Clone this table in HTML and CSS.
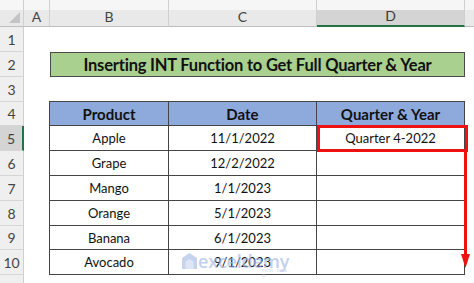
FILE: index.html
```html
<!DOCTYPE html>
<html>
<head>
<meta charset="utf-8">
<link rel="stylesheet" href="styles.css">
</head>
<body>
<div class="sheet">
  <div class="corner"><span class="tri"></span></div>
  <div class="ch">A</div>
  <div class="ch">B</div>
  <div class="ch">C</div>
  <div class="ch sel">D</div>
  <div class="ch last"></div>

  <div class="rh r1">1</div>
  <div class="rh r2">2</div>
  <div class="rh r3">3</div>
  <div class="rh r4">4</div>
  <div class="rh r5 sel">5</div>
  <div class="rh r6">6</div>
  <div class="rh r7">7</div>
  <div class="rh r8">8</div>
  <div class="rh r9">9</div>
  <div class="rh r10">10</div>
  <div class="rh r11"></div>

  <div class="title">Inserting INT Function to Get Full Quarter &amp; Year</div>

  <div class="tbl">
    <div class="th">Product</div><div class="th">Date</div><div class="th">Quarter &amp; Year</div>
    <div class="td">Apple</div><div class="td">11/1/2022</div><div class="td">Quarter 4-2022</div>
    <div class="td">Grape</div><div class="td">12/2/2022</div><div class="td"></div>
    <div class="td">Mango</div><div class="td">1/1/2023</div><div class="td"></div>
    <div class="td">Orange</div><div class="td">5/1/2023</div><div class="td"></div>
    <div class="td">Banana</div><div class="td">6/1/2023</div><div class="td"></div>
    <div class="td">Avocado</div><div class="td">9/1/2023</div><div class="td"></div>
  </div>

  <div class="watermark">
    <svg class="wm-logo" width="15" height="16" viewBox="0 0 15 16"><path d="M7.5 0 L15 5 L15 16 L0 16 L0 5 Z" fill="#a9bde6"/><path d="M7.5 6 L11.5 8.5 L11.5 16 L3.5 16 L3.5 8.5 Z" fill="#cdd9f1"/></svg>
    <span class="wm-text">exceldemy</span>
    <span class="wm-sub">EXCEL · DATA · BI</span>
  </div>

  <div class="redbox"></div>
  <svg class="arrow" width="14" height="120" viewBox="0 0 14 120"><rect x="5" y="0" width="3" height="106" fill="#ee1111"/><polygon points="2,104 11,104 6.5,118" fill="#ee1111"/></svg>
</div>
</body>
</html>
```

FILE: styles.css
```css
* { box-sizing: border-box; }
html, body { margin: 0; padding: 0; background: #ffffff; }
body { width: 474px; height: 283px; overflow: hidden; font-family: Lato, "Open Sans", sans-serif; }

.sheet {
  position: relative;
  display: grid;
  grid-template-columns: 24px 26px 119px 148px 148px 9px;
  grid-template-rows: 27px 25px 25px 25px 24px 25px 25px 25px 25px 24px 25px 8px;
  width: 474px;
  height: 283px;
}

.corner {
  grid-column: 1; grid-row: 1;
  background: linear-gradient(#f6f6f6 0 10px, #e9e9e9 10px);
  border-right: 1px solid #cfcfcf;
  border-bottom: 1px solid #bdbdbd;
  position: relative;
}
.tri {
  position: absolute; right: 3px; bottom: 3px;
  width: 0; height: 0;
  border-left: 11px solid transparent;
  border-bottom: 11px solid #c4c4c4;
}

.ch {
  grid-row: 1;
  background: linear-gradient(#f6f6f6 0 10px, #e9e9e9 10px);
  border-right: 1px solid #d0d0d0;
  border-bottom: 1px solid #bdbdbd;
  display: flex; align-items: flex-end; justify-content: center;
  padding-bottom: 1px;
  font-size: 14px; color: #444;
}
.ch.sel {
  background: linear-gradient(#f6f6f6 0 10px, #d4d4d4 10px);
  border-bottom: 2px solid #217346;
  color: #3a3a3a;
}
.ch.last { border-right: none; }

.rh {
  grid-column: 1;
  background: #efefef;
  border-right: 1px solid #cfcfcf;
  border-bottom: 1px solid #d6d6d6;
  display: flex; align-items: center; justify-content: center;
  font-size: 14px; color: #444;
}
.rh.sel { background: #d4d4d4; border-right: 2px solid #217346; }
.r1 { grid-row: 2; } .r2 { grid-row: 3; } .r3 { grid-row: 4; } .r4 { grid-row: 5; }
.r5 { grid-row: 6; } .r6 { grid-row: 7; } .r7 { grid-row: 8; } .r8 { grid-row: 9; }
.r9 { grid-row: 10; } .r10 { grid-row: 11; } .r11 { grid-row: 12; border-bottom: none; }

.title {
  grid-column: 3 / 6; grid-row: 3;
  background: #a9d08e;
  border: 1px solid #4a4a4a;
  display: flex; align-items: center; justify-content: center;
  font-weight: 700; font-size: 16.5px; color: #111;
  letter-spacing: -0.2px;
}

.tbl {
  grid-column: 3 / 6; grid-row: 5 / 12;
  display: grid;
  grid-template-columns: 119px 148px 148px;
  grid-template-rows: 24px 25px 25px 25px 25px 24px 25px;
  border-top: 1px solid #444;
  border-left: 1px solid #444;
  margin-top: -1px; margin-left: -1px;
  width: 416px;
}
.th, .td {
  border-right: 1px solid #444;
  border-bottom: 1px solid #444;
  display: flex; align-items: center; justify-content: center;
  color: #111;
}
.th { background: #8ea9db; font-weight: 700; font-size: 15px; }
.td { background: #fff; font-size: 13px; }

.watermark {
  position: absolute; left: 182px; top: 249px;
  display: flex; align-items: center; gap: 1px;
  opacity: 0.65;
}
.wm-text { font-family: "Open Sans", sans-serif; font-size: 18px; font-weight: 600; color: #a3b8e6; letter-spacing: -0.2px; }
.wm-sub { position: absolute; left: 80px; top: 19px; font-size: 4px; color: #b8c6e6; }

.redbox {
  position: absolute; left: 317px; top: 125px;
  width: 151px; height: 27px;
  border: 3px solid #ee1111;
}
.arrow { position: absolute; left: 459px; top: 150px; }
```
